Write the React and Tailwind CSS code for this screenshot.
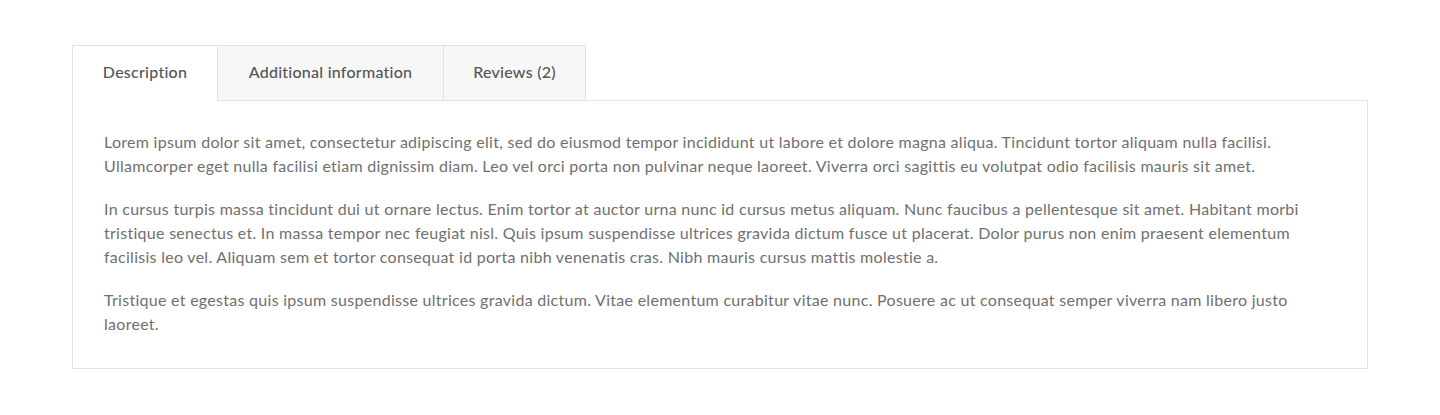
import { useState } from 'react';

const tabs = [
  { label: 'Description', w: 'w-[146px]' },
  { label: 'Additional information', w: 'w-[226px]' },
  { label: 'Reviews (2)', w: 'w-[142px]' },
];

const paragraphs = [
  'Lorem ipsum dolor sit amet, consectetur adipiscing elit, sed do eiusmod tempor incididunt ut labore et dolore magna aliqua. Tincidunt tortor aliquam nulla facilisi. Ullamcorper eget nulla facilisi etiam dignissim diam. Leo vel orci porta non pulvinar neque laoreet. Viverra orci sagittis eu volutpat odio facilisis mauris sit amet.',
  'In cursus turpis massa tincidunt dui ut ornare lectus. Enim tortor at auctor urna nunc id cursus metus aliquam. Nunc faucibus a pellentesque sit amet. Habitant morbi tristique senectus et. In massa tempor nec feugiat nisl. Quis ipsum suspendisse ultrices gravida dictum fusce ut placerat. Dolor purus non enim praesent elementum facilisis leo vel. Aliquam sem et tortor consequat id porta nibh venenatis cras. Nibh mauris cursus mattis molestie a.',
  'Tristique et egestas quis ipsum suspendisse ultrices gravida dictum. Vitae elementum curabitur vitae nunc. Posuere ac ut consequat semper viverra nam libero justo laoreet.',
];

export default function App() {
  const [active, setActive] = useState(0);

  return (
    <div className="min-h-[415px] bg-white px-[72px] pt-[45px] font-['Lato',sans-serif]">
      {/* Tab headers */}
      <div className="flex">
        {tabs.map((t, i) => (
          <button
            key={t.label}
            onClick={() => setActive(i)}
            className={`${t.w} h-[56px] pb-[3px] text-[16px] tracking-[0.25px] font-medium text-[#555] border-t border-r border-[#e1e1e1] ${
              i === 0 ? 'border-l' : ''
            } ${active === i ? 'bg-white -mb-px relative z-10' : 'bg-[#f7f7f7] border-b'}`}
          >
            {t.label}
          </button>
        ))}
      </div>

      {/* Panel */}
      <div className="border border-[#e1e1e1] -mt-px px-[31px] pt-[29px] pb-[32px]">
        {active === 0 &&
          paragraphs.map((p, i) => (
            <p key={i} className="text-[16px] tracking-[0.28px] leading-[24px] text-[#707070] mb-[19px] last:mb-0">
              {p}
            </p>
          ))}
      </div>
    </div>
  );
}
